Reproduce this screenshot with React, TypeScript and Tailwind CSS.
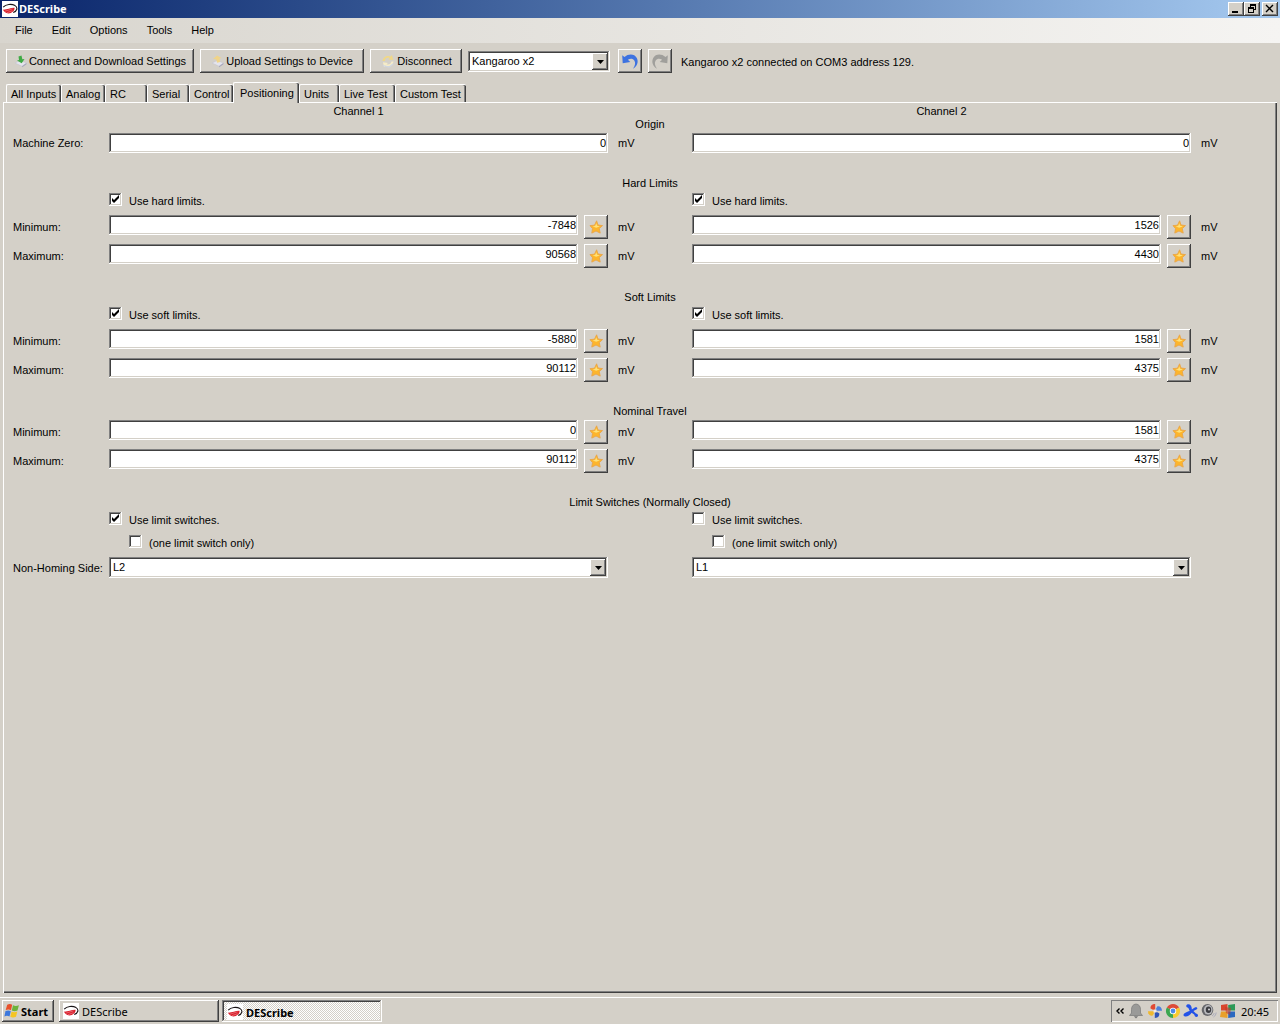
import React, { useState } from "react";

const SUNKEN =
  "shadow-[inset_-1px_-1px_0_#ffffff,inset_1px_1px_0_#808080,inset_-2px_-2px_0_#d4d0c8,inset_2px_2px_0_#404040]";
const RAISED =
  "shadow-[inset_-1px_-1px_0_#404040,inset_1px_1px_0_#ffffff,inset_-2px_-2px_0_#808080]";
const GRID = "grid grid-cols-[96px_1fr_84px_1fr_84px]";

function BrandIcon() {
  return (
    <svg viewBox="0 0 16 16" className="size-4 shrink-0 bg-white" aria-hidden="true">
      <path d="M1.200 6.200C4 3.200 9.500 2.600 13 4.600c3.200 2 2.200 5.400-1.800 7" fill="none" stroke="#1a1416" strokeWidth="1.100" />
      <path d="M.8 8.600c4 .3 7.600-2 11.700-1.800.6 2.600-2.600 5.700-6.200 5.700-2.500 0-4.300-1.600-5.500-3.900z" fill="#d9202c" />
      <path d="M3 10.200l7.500-2.400M5 11.700l5.500-2" stroke="#f3a0a6" strokeWidth=".5" />
    </svg>
  );
}

function StarIcon() {
  return (
    <svg viewBox="0 0 16 16" className="size-4" aria-hidden="true">
      <path
        d="M8.600 1.800l1.400 4.200 4.500.6-3.200 3 .9 4.500-4.200-2.100-4.200 2.100.7-4.500L2 6.600l4.500-.4z"
        fill="#fdb52c"
        stroke="#e9a548"
        strokeWidth=".9"
        strokeLinejoin="round"
      />
      <path d="M8.300 4.200l.8 2.600 2.800.4-3.600 1.600-3.700-1.300 2.500-.5z" fill="#ffe27a" />
    </svg>
  );
}

function DriveIcon({ arrow, up }: { arrow: string; up?: boolean }) {
  return (
    <svg viewBox="0 0 14 14" className="size-3.5 shrink-0" aria-hidden="true">
      <path d="M1 9l5-2.500 6.500 2.500-4.500 3.300z" fill="#e4e4ec" stroke="#c0c0cc" strokeWidth=".5" />
      <path d="M8 12.300L12.500 9v1.300l-4.300 3z" fill="#a4a4bc" />
      {up ? (
        <path d="M2 5L6 1.500 10.500 4l-2 .6.600 3.400-3 .8-1-3.500z" fill={arrow} />
      ) : (
        <path d="M4.500 2.500l3-1 .8 3.700 2.200-.2-2.800 4.200L3 6.500l2-.6z" fill={arrow} />
      )}
    </svg>
  );
}

function DisconnectIcon() {
  return (
    <svg viewBox="0 0 16 16" className="size-4 shrink-0" aria-hidden="true">
      <path d="M2.500 8C3 4 7 1.800 10.500 3.500L12 2l1.200 5-5-.6 1.400-1.400C7 4.200 5 5.500 4.800 8z" fill="#f0d888" />
      <path d="M13.500 8.500c-.5 4-4.300 5.800-8 4.200L4 14l-1-4.800 5 .7-1.500 1.400c2.500.8 4.500-.4 5-2.800z" fill="#f6ecc8" />
      <path d="M3 12.500l6 1.500 4-3" fill="none" stroke="#cfd6e2" strokeWidth="1.200" />
    </svg>
  );
}

function TurnIcon({ color, flip }: { color: string; flip?: boolean }) {
  return (
    <svg viewBox="0 0 20 20" className="size-5" aria-hidden="true">
      <g transform={flip ? "matrix(-1 0 0 1 20 0)" : undefined}>
        <path
          d="M2.200 4.200l2.300 1.900C8.500 2.500 14.500 2.800 16.800 7c1.900 3.700.6 8.300-3.800 10.800 2.200-3.100 2.800-6.200 1.300-8.400-1.400-2-4.200-2.100-6.400-.6l2.400 2.300-7.600 1.200z"
          fill={color}
        />
      </g>
    </svg>
  );
}

function WindowsFlag() {
  return (
    <svg viewBox="0 0 16 16" className="size-4 shrink-0" aria-hidden="true">
      <path d="M3.200 1.800c2-1 3.300-.9 5 0L7 7.200c-1.700-1-3.300-1-5.300-.1z" fill="#e8502a" />
      <path d="M9 2.200c1.900.9 3.500.9 5.900 0L13.500 7.500c-2.200 1-3.800.9-5.700 0z" fill="#6db33b" />
      <path d="M1.500 8.100c2-.9 3.600-.8 5.300.1l-1.300 5.300c-1.700-1-3.300-1-5.100-.1z" fill="#3c78dc" />
      <path d="M7.600 8.500c1.900.9 3.500 1 5.700 0L12 13.800c-2.200.9-3.900.9-5.700 0z" fill="#f5c524" />
    </svg>
  );
}

function DropDown({
  id,
  label,
  value,
  options,
  className,
}: {
  id: string;
  label: string;
  value: string;
  options: string[];
  className: string;
}) {
  return (
    <div className={`relative h-[21px] ${className}`}>
      <select
        id={id}
        aria-label={label}
        defaultValue={value}
        className={`block h-[21px] w-full appearance-none bg-white pr-5 pl-1 text-[11px] leading-[21px] ${SUNKEN}`}
      >
        {options.map((o) => (
          <option key={o}>{o}</option>
        ))}
      </select>
      <span
        className={`pointer-events-none absolute top-0.5 right-0.5 flex h-[17px] w-4 items-center justify-center bg-[#d4d0c8] ${RAISED}`}
      >
        <svg viewBox="0 0 7 4" className="h-1 w-[7px]" aria-hidden="true">
          <path d="M0 0h7L3.500 4z" />
        </svg>
      </span>
    </div>
  );
}

function Check({ label, name, checked, indent }: { label: string; name: string; checked?: boolean; indent?: boolean }) {
  return (
    <label className={`flex h-[23px] items-start gap-[7px] pt-[3px] ${indent ? "pl-5" : ""}`}>
      <span className="relative size-[13px] shrink-0">
        <input
          type="checkbox"
          aria-label={name}
          defaultChecked={checked}
          className={`peer block size-[13px] appearance-none bg-white ${SUNKEN}`}
        />
        <svg
          viewBox="0 0 13 13"
          className="pointer-events-none absolute inset-0 hidden size-[13px] peer-checked:block"
          aria-hidden="true"
        >
          <path d="M3 5l2 2 5-5v3l-5 5-2-2z" />
        </svg>
      </span>
      <span className="pt-0.5">{label}</span>
    </label>
  );
}

function Heading({ children }: { children: React.ReactNode }) {
  return <h2 className="col-span-3 col-start-2 text-center leading-[13px]">{children}</h2>;
}

function ValueRow({ section, label, values, star }: { section: string; label: string; values: string[]; star?: boolean }) {
  const base = `${section}-${label}`.toLowerCase().replace(/[^a-z]+/g, "-");
  return (
    <div className={`${GRID} ${star ? "h-[29px]" : "h-[26px]"}`}>
      <label htmlFor={`${base}-0`} className={star ? "pt-2" : "pt-1.5"}>
        {label}:
      </label>
      {values.map((v, i) => (
        <React.Fragment key={i}>
          <div className="flex items-start gap-1.5 pt-0.5">
            <input
              id={`${base}-${i}`}
              type="text"
              aria-label={`${section} ${label}, channel ${i + 1}`}
              defaultValue={v}
              className={`h-5 min-w-0 flex-1 bg-white px-0.5 text-right text-[11px] leading-5 ${SUNKEN}`}
            />
            {star && (
              <button
                type="button"
                aria-label={`Set ${section} ${label}, channel ${i + 1}`}
                className={`flex size-6 items-center justify-center ${RAISED}`}
              >
                <StarIcon />
              </button>
            )}
          </div>
          <span className={`pl-2.5 ${star ? "pt-2" : "pt-1.5"}`}>mV</span>
        </React.Fragment>
      ))}
    </div>
  );
}

const TABS = [
  { name: "All Inputs", width: "w-[55px]" },
  { name: "Analog", width: "w-[44px]" },
  { name: "RC", width: "w-[42px]" },
  { name: "Serial", width: "w-[42px]" },
  { name: "Control", width: "w-[44px]" },
  { name: "Positioning", width: "w-[66px]" },
  { name: "Units", width: "w-[40px]" },
  { name: "Live Test", width: "w-[56px]" },
  { name: "Custom Test", width: "w-[71px]" },
];

const LIMITS = [
  { title: "Hard Limits", check: "Use hard limits.", min: ["-7848", "1526"], max: ["90568", "4430"] },
  { title: "Soft Limits", check: "Use soft limits.", min: ["-5880", "1581"], max: ["90112", "4375"] },
  { title: "Nominal Travel", check: "", min: ["0", "1581"], max: ["90112", "4375"] },
];

function TitleBar() {
  const box = `flex h-3.5 w-4 items-center justify-center bg-[#d4d0c8] ${RAISED}`;
  return (
    <header className="flex h-[18px] items-center bg-linear-to-r from-[#0a246a] to-[#a6caf0] pr-0.5 pl-0.5">
      <BrandIcon />
      <h1 className="pb-px pl-px font-['Noto_Sans',sans-serif] text-[11px] font-bold text-white">DEScribe</h1>
      <div className="ml-auto flex">
        <button type="button" aria-label="Minimize" className={box}>
          <svg viewBox="0 0 12 10" className="h-2.5 w-3"><path d="M2 7h6v2H2z" /></svg>
        </button>
        <button type="button" aria-label="Restore" className={box}>
          <svg viewBox="0 0 12 10" className="h-2.5 w-3">
            <path d="M4 0h6v6H8V5h1V2H5v1H4zM2 3h6v6H2zm1 2v3h4V5z" fillRule="evenodd" />
          </svg>
        </button>
        <button type="button" aria-label="Close" className={`ml-0.5 ${box}`}>
          <svg viewBox="0 0 12 10" className="h-2.5 w-3"><path d="M2 1l7 7M9 1L2 8" stroke="#000" strokeWidth="1.400" /></svg>
        </button>
      </div>
    </header>
  );
}

function Toolbar() {
  const btn = `flex h-6 items-center justify-center ${RAISED}`;
  return (
    <div className="flex h-[30px] items-end gap-1.5 pl-1.5 whitespace-nowrap">
      <button type="button" className={`${btn} w-[188px] gap-px`}>
        <DriveIcon arrow="#3faa45" />
        Connect and Download Settings
      </button>
      <button type="button" className={`${btn} w-[164px] gap-px`}>
        <DriveIcon arrow="#f0d488" up />
        Upload Settings to Device
      </button>
      <button type="button" className={`${btn} w-[92px] gap-px`}>
        <DisconnectIcon />
        Disconnect
      </button>
      <DropDown id="device" label="Device" value="Kangaroo x2" options={["Kangaroo x2"]} className="mr-0.5 mb-px w-[142px]" />
      <button type="button" aria-label="Undo" className={`${btn} w-6`}>
        <TurnIcon color="#3d72e0" />
      </button>
      <button type="button" aria-label="Redo" className={`${btn} w-6`}>
        <TurnIcon color="#a09f9b" flip />
      </button>
      <p className="pb-[3px] pl-[3px] leading-4">Kangaroo x2 connected on COM3 address 129.</p>
    </div>
  );
}

function Taskbar() {
  const font = "font-['Noto_Sans',sans-serif] text-[11px]";
  return (
    <footer className={`flex h-7 items-start gap-[3px] border-t border-[#d4d0c8] px-0.5 pt-[3px] shadow-[inset_0_1px_0_#ffffff] ${font}`}>
      <button type="button" className={`mr-0.5 flex h-[22px] w-[52px] items-center gap-px pl-0.5 font-bold ${RAISED}`}>
        <WindowsFlag />
        Start
      </button>
      <button type="button" className={`flex h-[22px] w-40 items-center gap-[3px] pl-1 ${RAISED}`}>
        <BrandIcon />
        DEScribe
      </button>
      <button
        type="button"
        aria-pressed="true"
        className={`flex h-[22px] w-40 items-center gap-[3px] bg-[repeating-conic-gradient(#ffffff_0%_25%,#d4d0c8_0%_50%)] bg-[length:2px_2px] pt-0.5 pl-[5px] font-bold ${SUNKEN}`}
      >
        <BrandIcon />
        DEScribe
      </button>
      <div className="ml-auto flex h-[22px] w-[167px] items-center gap-0.5 pl-1 shadow-[inset_1px_1px_0_#808080,inset_-1px_-1px_0_#ffffff]">
        <svg viewBox="0 0 10 16" className="mr-px h-4 w-2.5" aria-hidden="true">
          <path d="M4.500 5.500L2 8l2.500 2.500M8.500 5.500L6 8l2.500 2.500" fill="none" stroke="#000" strokeWidth="1.400" />
        </svg>
        <svg viewBox="0 0 16 16" className="size-4" aria-hidden="true">
          <path d="M8 1c3 .3 4.500 2.500 4.500 5.500V10l2 2.500h-13l2-2.500V6.500C3.500 3.500 5 1.300 8 1z" fill="#9a9a98" stroke="#777" strokeWidth=".7" />
          <path d="M5.800 13.200h4.400L8 15.500z" fill="#777" />
        </svg>
        <svg viewBox="0 0 16 16" className="ml-px size-4" aria-hidden="true">
          <path d="M8.200 8V1C5 1 3 3 3.600 5.600z" fill="#e04a34" />
          <path d="M8 7.800h7c0-3.200-2.200-5-4.800-4.400z" fill="#4c7fdc" />
          <path d="M7.800 8v7c3.200 0 5-2.200 4.400-4.800z" fill="#2f55b8" />
          <path d="M8 8.200H1c0 3.200 2.200 5 4.800 4.400z" fill="#f0b82c" />
          <path d="M6.500 6.500h3v3h-3z" fill="#f3e9e4" />
        </svg>
        <svg viewBox="0 0 16 16" className="size-4" aria-hidden="true">
          <path d="M8 8L1.900 4.500A7 7 0 0 1 14.100 4.500z" fill="#dd4b39" />
          <path d="M8 8l6.100-3.500A7 7 0 0 1 8 15z" fill="#f8cc32" />
          <path d="M8 8v7A7 7 0 0 1 1.900 4.500z" fill="#3ca650" />
          <circle cx="8" cy="8" r="3.200" fill="#fff" />
          <circle cx="8" cy="8" r="2.400" fill="#4d8be8" />
        </svg>
        <svg viewBox="0 0 16 16" className="size-4" aria-hidden="true">
          <path
            d="M4.200 1.500C7 .8 9 3 8.800 6.600l3.400-2.300c2-.8 3 1.500 1.200 2.200l-3 1.500 2.500 2.500c2.600.2 2.800 3.300.6 3.500-1.500 0-1.900-1.500-2.400-2.500L8.600 9.800C6.700 13.500 1.700 14.500.6 12.500-.2 10.800 3.200 9 6.800 8 5.800 6.500 6 5 4.500 4.500 3 4.200 2.800 2 4.200 1.500z"
            fill="#2252e8"
          />
        </svg>
        <svg viewBox="0 0 16 16" className="size-4" aria-hidden="true">
          <ellipse cx="6.500" cy="7" rx="5.800" ry="6" fill="#66676b" />
          <ellipse cx="7.200" cy="6.800" rx="4.300" ry="4.800" fill="#b9babd" />
          <ellipse cx="7.500" cy="6.800" rx="2.700" ry="3.200" fill="#3c3d42" />
          <circle cx="8" cy="6.500" r="1" fill="#d8d8da" />
          <path d="M12.500 14c1.500-.8 2.500-2.500 2.700-4.500M11 13c1.200-.6 1.900-1.600 2.200-3" fill="none" stroke="#9fa2b8" strokeWidth=".8" />
        </svg>
        <svg viewBox="0 0 16 16" className="ml-px size-4" aria-hidden="true">
          <path d="M1 2l6.500-1v6.500H1z" fill="#d8462c" />
          <path d="M8.200 2L15 1v6.500H8.200z" fill="#2d9a58" />
          <path d="M1 8.500h6.500V15L0 14z" fill="#e8a02c" />
          <path d="M8.200 8.500H15V14l-6.800 1z" fill="#2b68c0" />
          <path d="M5 4l6 1-1 7-4-2z" fill="#c33a2a" opacity=".6" />
        </svg>
        <time className="pl-[3px]">20:45</time>
      </div>
    </footer>
  );
}

export default function App() {
  const [active, setActive] = useState("Positioning");
  return (
    <div className="flex min-h-screen flex-col bg-[#d4d0c8] font-['Liberation_Sans',Arial,sans-serif] text-[11px] leading-[13px] text-black">
      <TitleBar />
      <nav className="flex h-[25px] items-center gap-[19px] bg-linear-to-r from-[#d8d5ce] to-[#f5f4f2] pl-[15px]">
        {["File", "Edit", "Options", "Tools", "Help"].map((m) => (
          <button key={m} type="button">
            {m}
          </button>
        ))}
      </nav>
      <Toolbar />
      <main className="flex flex-1 flex-col pt-[9px] pr-[3px] pb-[3px] pl-[3px]">
        <div role="tablist" className="flex h-5 items-end pl-[3px]">
          {TABS.map((t) => {
            const on = t.name === active;
            return (
              <button
                key={t.name}
                type="button"
                role="tab"
                aria-selected={on}
                onClick={() => setActive(t.name)}
                className={`${t.width} rounded-t-[2px] border-t border-l border-white pl-1 text-left whitespace-nowrap shadow-[inset_-1px_0_0_#404040,inset_-2px_0_0_#808080] ${
                  on ? "relative -mb-px h-[21px] bg-[#d4d0c8] pl-1.5" : "h-[18px] pt-0.5"
                }`}
              >
                {t.name}
              </button>
            );
          })}
        </div>
        <section
          role="tabpanel"
          aria-label={active}
          className="flex-1 border-t border-l border-white pt-0.5 pr-0.5 pl-[9px] shadow-[inset_-1px_-1px_0_#404040,inset_-2px_-2px_0_#808080]"
        >
          <div className={GRID}>
            <h2 className="col-start-2 text-center">Channel 1</h2>
            <h2 className="col-start-4 text-center">Channel 2</h2>
          </div>
          <div className={GRID}>
            <Heading>Origin</Heading>
          </div>
          <ValueRow section="Origin" label="Machine Zero" values={["0", "0"]} />
          {LIMITS.map((s) => (
            <div key={s.title} className="pt-5">
              <div className={GRID}>
                <Heading>{s.title}</Heading>
                {s.check && (
                  <>
                    <div className="col-start-2">
                      <Check label={s.check} name={`${s.check} Channel 1`} checked />
                    </div>
                    <div className="col-start-4">
                      <Check label={s.check} name={`${s.check} Channel 2`} checked />
                    </div>
                  </>
                )}
              </div>
              <ValueRow section={s.title} label="Minimum" values={s.min} star />
              <ValueRow section={s.title} label="Maximum" values={s.max} star />
            </div>
          ))}
          <div className={`pt-5 ${GRID}`}>
            <Heading>Limit Switches (Normally Closed)</Heading>
            {[1, 2].map((c) => (
              <div key={c} className={c === 1 ? "col-start-2" : "col-start-4"}>
                <Check label="Use limit switches." name={`Use limit switches. Channel ${c}`} checked={c === 1} />
                <Check label="(one limit switch only)" name={`One limit switch only, channel ${c}`} indent />
              </div>
            ))}
            <label htmlFor="side-1" className="col-start-1 pt-[7px] whitespace-nowrap">
              Non-Homing Side:
            </label>
            <DropDown id="side-1" label="Non-Homing Side, channel 1" value="L2" options={["L1", "L2"]} className="mt-0.5" />
            <DropDown id="side-2" label="Non-Homing Side, channel 2" value="L1" options={["L1", "L2"]} className="col-start-4 mt-0.5" />
          </div>
        </section>
      </main>
      <Taskbar />
    </div>
  );
}
